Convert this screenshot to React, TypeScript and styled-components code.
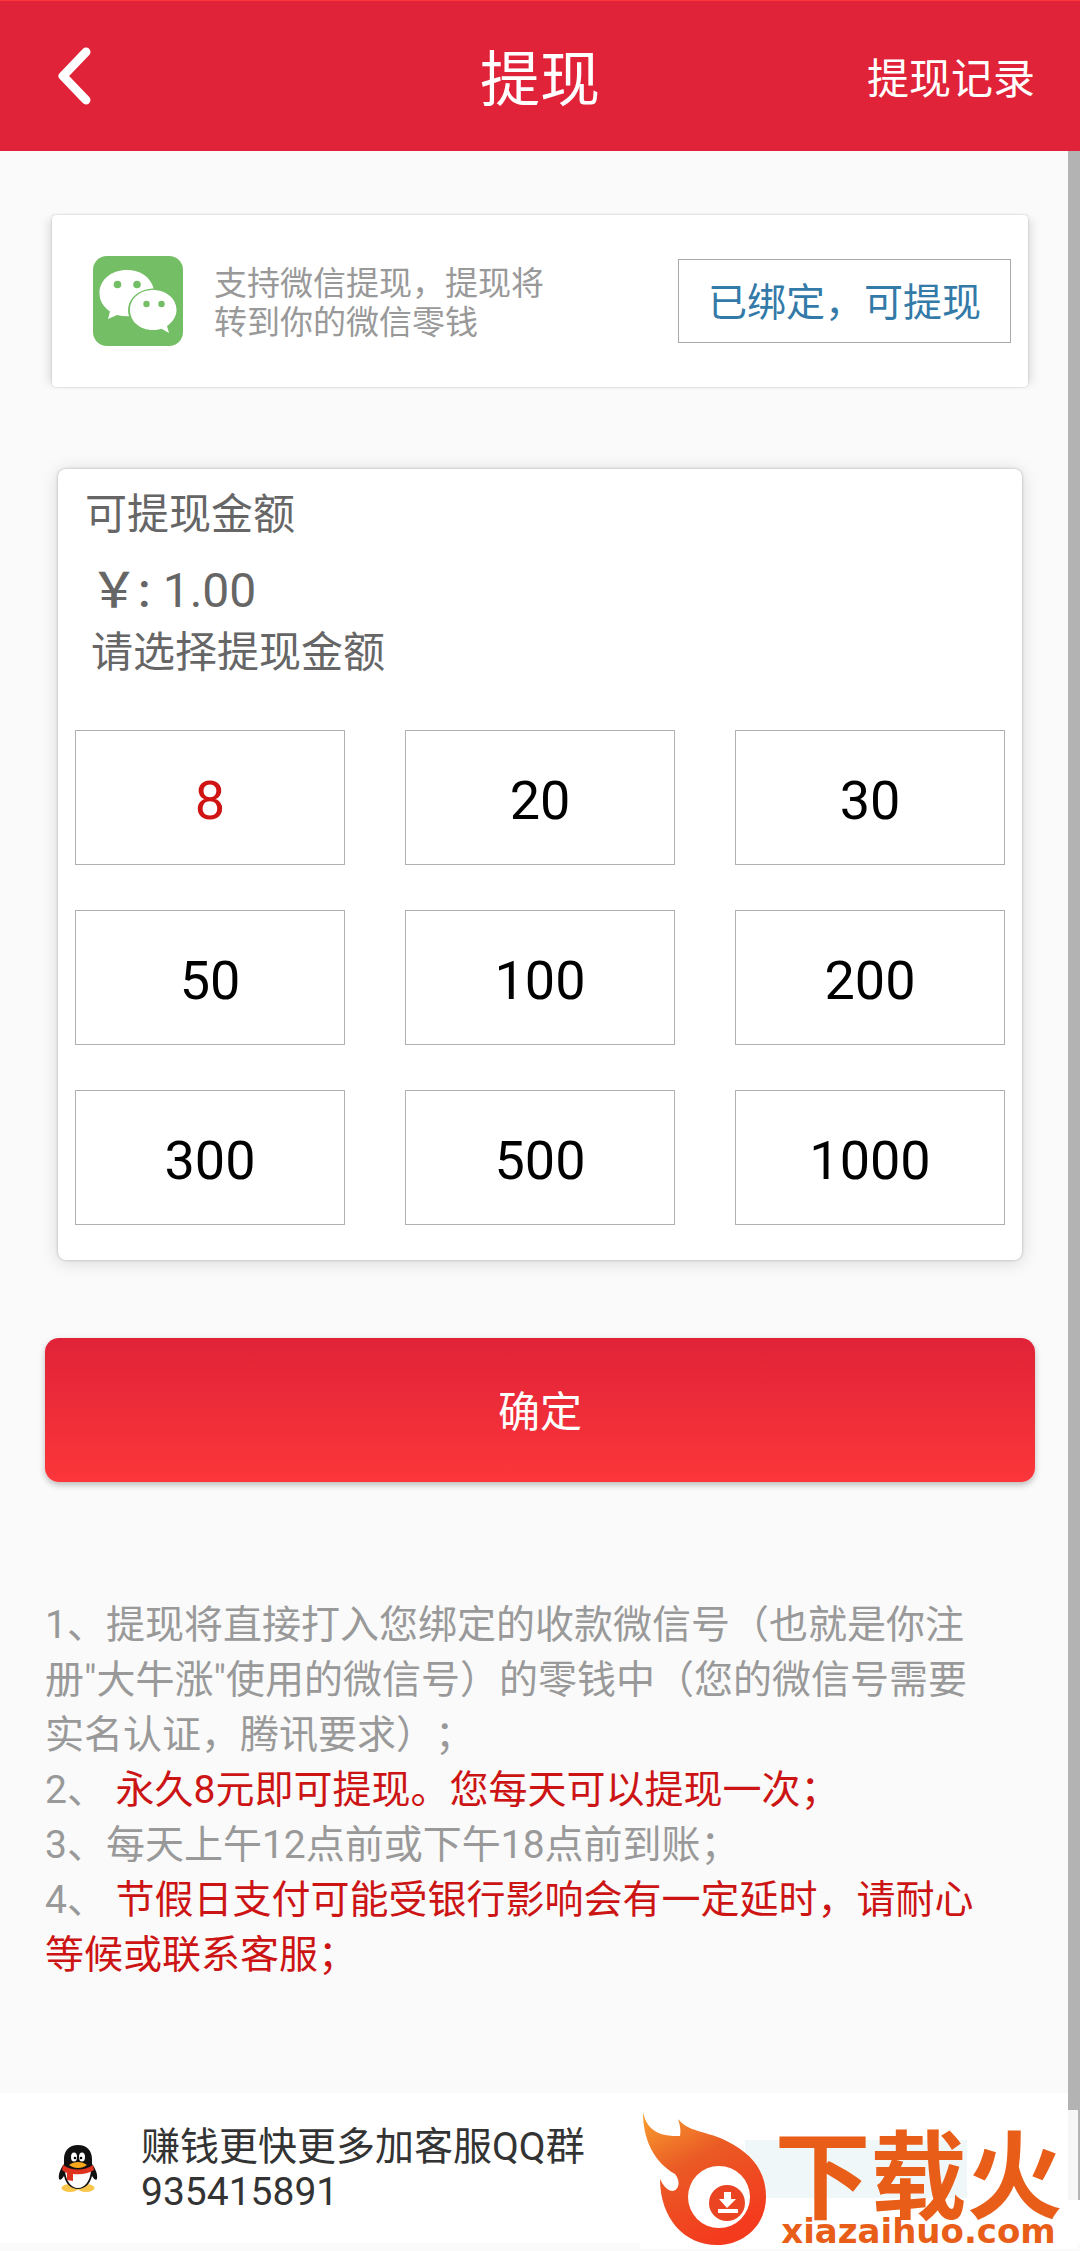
import React, { useState } from "react";
import styled, { createGlobalStyle } from "styled-components";

const GlobalStyle = createGlobalStyle`
  *, *::before, *::after { box-sizing: border-box; }
  html, body { margin: 0; padding: 0; }
  body {
    background: #fafafa;
    color: #666666;
    font-family: Roboto, "Noto Sans CJK SC", sans-serif;
    text-spacing-trim: space-all;
    overflow-x: hidden;
  }
  button, a { font: inherit; color: inherit; text-decoration: none; }
  button { margin: 0; padding: 0; border: 0; background: none; cursor: pointer; }
`;

const Page = styled.div`
  position: relative;
  display: flex;
  flex-direction: column;
  min-height: 100vh;
`;

const Header = styled.header`
  display: grid;
  grid-template-columns: 1fr auto 1fr;
  align-items: center;
  height: 151px;
  padding: 0 45px;
  background: #e02338;
  border-top: 1px solid #fc363a;
  color: #ffffff;
`;

const BackButton = styled.button`
  justify-self: start;
  display: flex;
  padding: 0 12px;
`;

const Title = styled.h1`
  margin: 0;
  padding-top: 10px;
  font-size: 60px;
  line-height: 72px;
  font-weight: 400;
`;

const RecordsLink = styled.a`
  justify-self: end;
  padding-top: 8px;
  font-size: 42px;
  line-height: 60px;
`;

const Main = styled.main`
  flex: 1;
  display: flex;
  flex-direction: column;
`;

const WechatCard = styled.section`
  display: flex;
  align-items: center;
  height: 172px;
  margin: 64px 52px 0;
  padding: 0 17px 0 41px;
  background: #ffffff;
  border-radius: 4px;
  box-shadow: 0 0 2px rgba(0, 0, 0, 0.25), 8px 0 8px -4px rgba(0, 0, 0, 0.1), -8px 0 8px -4px rgba(0, 0, 0, 0.1);
`;

const WechatText = styled.p`
  flex: 1;
  margin: 0 0 0 31px;
  padding-top: 4px;
  font-size: 33px;
  line-height: 39px;
  color: #999999;
`;

const BoundButton = styled.button`
  width: 333px;
  height: 84px;
  padding-top: 4px;
  border: 1px solid #aaaaaa;
  background: #ffffff;
  color: #337aa8;
  font-size: 39px;
  line-height: 60px;
`;

const AmountCard = styled.section`
  margin: 82px 58px 0;
  padding: 16px 17px 35px;
  background: #ffffff;
  border-radius: 8px;
  box-shadow: 0 0 3px rgba(0, 0, 0, 0.25), 0 2px 18px rgba(0, 0, 0, 0.14);
`;

const AmountLabel = styled.h2<{ $indent: number }>`
  margin: 0;
  padding-left: ${(p) => p.$indent}px;
  font-size: 42px;
  line-height: 60px;
  font-weight: 400;
`;

const Balance = styled.p`
  display: flex;
  align-items: center;
  margin: 0;
  padding: 16px 0 2px 15px;
  font-size: 48px;
  line-height: 60px;
`;

const Currency = styled.span`
  margin-right: 12px;
  font-weight: 500;
`;

const AmountGrid = styled.div`
  display: grid;
  grid-template-columns: repeat(3, 1fr);
  gap: 45px 60px;
  margin-top: 47px;
`;

const AmountButton = styled.button<{ $selected: boolean }>`
  height: 135px;
  border: 1px solid #b0b0b0;
  background: #ffffff;
  color: ${(p) => (p.$selected ? "#d01414" : "#000000")};
  font-size: 54px;
  line-height: 60px;
  padding-top: 6px;
`;

const ConfirmButton = styled.button`
  height: 144px;
  margin: 78px 45px 0;
  padding-top: 6px;
  border-radius: 14px;
  background: linear-gradient(#e02338, #fc363a);
  box-shadow: 0 3px 6px rgba(0, 0, 0, 0.25);
  color: #ffffff;
  font-size: 42px;
  line-height: 60px;
`;

const Notes = styled.ol`
  list-style: none;
  margin: 116px 90px 0 45px;
  padding: 0;
  font-size: 39px;
  line-height: 55px;
  color: #999999;
`;

const Warning = styled.span`
  color: #cc1414;
`;

const Footer = styled.footer`
  display: flex;
  align-items: center;
  gap: 42px;
  height: 150px;
  margin-bottom: 8px;
  padding-left: 57px;
  background: #ffffff;
  color: #333333;
`;

const Contact = styled.p`
  margin: 0;
  padding-top: 4px;
  font-size: 39px;
  line-height: 45px;
`;

const ScrollThumb = styled.div`
  position: absolute;
  top: 151px;
  right: 0;
  bottom: 51px;
  width: 12px;
  background: #b3b3b3;
`;

const Watermark = styled.div`
  position: absolute;
  right: 2px;
  bottom: 2px;
  display: flex;
  align-items: flex-end;
  width: 438px;
  height: 139px;
  background:
    linear-gradient(#f0f7f9, #f0f7f9) 105px 30px / 222px 58px no-repeat,
    rgba(255, 255, 255, 0.88);
  color: #e85d17;
`;

const MarkText = styled.div`
  display: flex;
  flex-direction: column;
  align-items: center;
  flex: 1;
  padding: 0 8px 3px 0;
`;

const MarkName = styled.span`
  font-family: "Noto Sans CJK SC", sans-serif;
  font-size: 96px;
  line-height: 92px;
  font-weight: 700;
  white-space: nowrap;
`;

const MarkUrl = styled.span`
  font-family: "DejaVu Sans", sans-serif;
  font-size: 34px;
  line-height: 30px;
  font-weight: 700;
`;

const BackIcon = () => (
  <svg width="34" height="58" viewBox="0 0 34 58" aria-hidden="true">
    <path d="M29 5L6 29l23 24" fill="none" stroke="#fff" strokeWidth="9" strokeLinecap="round" strokeLinejoin="round" />
  </svg>
);

const WechatIcon = () => (
  <svg width="90" height="90" viewBox="0 0 90 90" role="img" aria-label="微信">
    <rect width="90" height="90" rx="14" fill="#74be66" />
    <path d="M34 14C18 14 6.500 24 6.500 37c0 8 4 14 10.500 18.500L15 63l9-4c4 1 8 1.500 12 1.300C32 44 44 33.500 61 33.500 58 21 47 14 34 14z" fill="#fff" />
    <ellipse cx="60" cy="54" rx="24.500" ry="21.500" fill="#74be66" />
    <path d="M60 34c-13 0-23 8.500-23 20s10 20 23 20c3 0 6-.5 8.500-1.300L76 77l-2-7c5.500-4 9.500-9.500 9.500-16C83.500 42.500 73 34 60 34z" fill="#fff" />
    <g fill="#74be66">
      <circle cx="24.500" cy="28.500" r="3.800" />
      <circle cx="44" cy="28.500" r="3.800" />
      <circle cx="53.500" cy="48" r="3.200" />
      <circle cx="68.500" cy="48" r="3.200" />
    </g>
  </svg>
);

const QQIcon = () => (
  <svg width="42" height="56" viewBox="0 0 42 56" role="img" aria-label="QQ">
    <g fill="#f9c64c">
      <ellipse cx="13" cy="48" rx="8.500" ry="4" />
      <ellipse cx="29" cy="48" rx="8.500" ry="4" />
    </g>
    <path d="M21 5C12 5 7 11 7 19v5C4 28 1 34 2 39c1 2 3 0 5-3 2 8 7 13 14 13s12-5 14-13c2 3 4 5 5 3 1-5-2-11-5-15v-5C35 11 30 5 21 5z" fill="#111" />
    <path d="M8 31c1 10 6 17 13 17s12-7 13-17c-8 3-18 3-26 0z" fill="#fff" />
    <path d="M6 25c9 6 21 6 30 0l1 5c-6 4-14 5-21 4v7l-6-1v-7c-2-1-4-2-5-3z" fill="#df3320" />
    <ellipse cx="17" cy="17" rx="3" ry="4.500" fill="#fff" />
    <ellipse cx="25" cy="17" rx="3" ry="4.500" fill="#fff" />
    <circle cx="18" cy="18" r="1.300" />
    <circle cx="24" cy="18" r="1.300" />
    <path d="M12 25c5-4 13-4 18 0-5 4-13 4-18 0z" fill="#f8a81b" />
  </svg>
);

const FlameLogo = () => (
  <svg width="127" height="137" viewBox="0 0 127 137" aria-hidden="true">
    <defs>
      <linearGradient id="flame" x1="0" y1="0" x2="0.500" y2="1">
        <stop offset="0" stopColor="#f9a12f" />
        <stop offset="0.450" stopColor="#ea5a25" />
        <stop offset="1" stopColor="#f43b1e" />
      </linearGradient>
    </defs>
    <path d="M3 0C6 14 14 25 40 24C41 18 40 13 38 7C50 22 70 18 94 33C116 46 126 63 126 85C126 113 104 133 77 133C44 133 20 106 20 67C23 73 27 79 33 79C40 77 40 68 35 62C14 50 3 28 3 0z" fill="url(#flame)" />
    <circle cx="79" cy="85" r="31" fill="#fff" />
    <circle cx="87" cy="91" r="18" fill="#ea4423" />
    <path d="M84 80h7v7h5l-9 9-8-9h5zM78 97h20v4H78z" fill="#fff" />
  </svg>
);

const amounts = [8, 20, 30, 50, 100, 200, 300, 500, 1000];

export default function App() {
  const [selected, setSelected] = useState(8);
  return (
    <Page>
      <GlobalStyle />
      <Header>
        <BackButton type="button" aria-label="返回"><BackIcon /></BackButton>
        <Title>提现</Title>
        <RecordsLink href="#records">提现记录</RecordsLink>
      </Header>
      <Main>
        <WechatCard>
          <WechatIcon />
          <WechatText>支持微信提现，提现将<br />转到你的微信零钱</WechatText>
          <BoundButton type="button">已绑定，可提现</BoundButton>
        </WechatCard>
        <AmountCard>
          <AmountLabel $indent={10}>可提现金额</AmountLabel>
          <Balance><Currency>￥:</Currency>1.00</Balance>
          <AmountLabel as="h3" $indent={16}>请选择提现金额</AmountLabel>
          <AmountGrid>
            {amounts.map((amount) => (
              <AmountButton key={amount} type="button" $selected={amount === selected} aria-pressed={amount === selected} onClick={() => setSelected(amount)}>
                {amount}
              </AmountButton>
            ))}
          </AmountGrid>
        </AmountCard>
        <ConfirmButton type="button">确定</ConfirmButton>
        <Notes>
          <li>1、提现将直接打入您绑定的收款微信号（也就是你注册"大牛涨"使用的微信号）的零钱中（您的微信号需要实名认证，腾讯要求）；</li>
          <li>2、 <Warning>永久8元即可提现。您每天可以提现一次；</Warning></li>
          <li>3、每天上午12点前或下午18点前到账；</li>
          <li>4、 <Warning>节假日支付可能受银行影响会有一定延时，请耐心等候或联系客服；</Warning></li>
        </Notes>
      </Main>
      <Footer>
        <QQIcon />
        <Contact>赚钱更快更多加客服QQ群<br />935415891</Contact>
      </Footer>
      <ScrollThumb />
      <Watermark>
        <FlameLogo />
        <MarkText>
          <MarkName>下载火</MarkName>
          <MarkUrl>xiazaihuo.com</MarkUrl>
        </MarkText>
      </Watermark>
    </Page>
  );
}
